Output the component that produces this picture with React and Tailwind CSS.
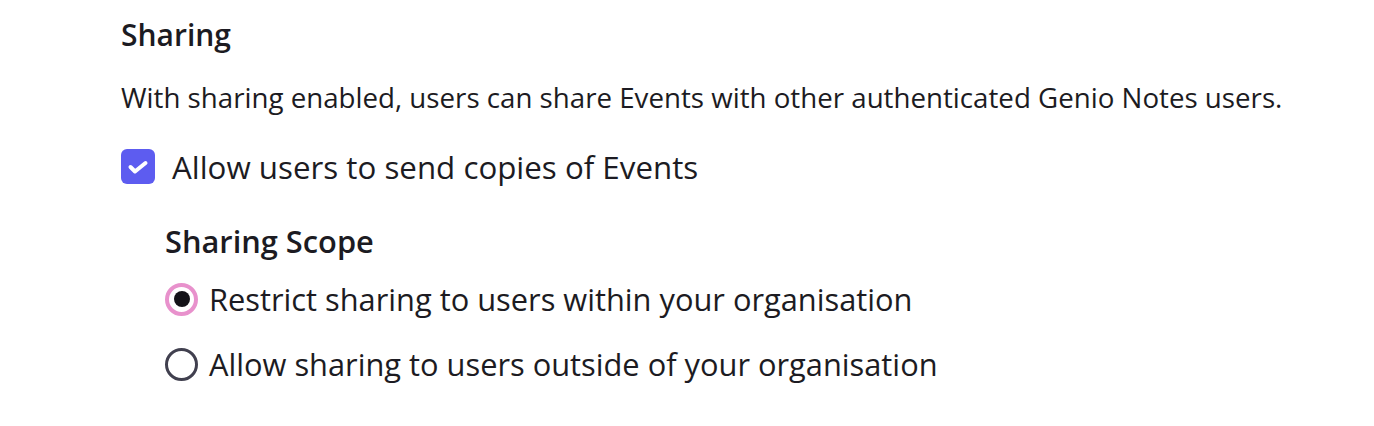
export default function App() {
  const font = { fontFamily: '"Open Sans", "Noto Sans", sans-serif' };
  return (
    <div className="w-[1374px] h-[426px] bg-white text-[#1c1b22] pl-[121px] pt-[16px]" style={font}>
      <h2 className="text-[30px] font-semibold leading-[38px]">Sharing</h2>
      <p className="mt-[28px] text-[27.7px] leading-[30px]">
        With sharing enabled, users can share Events with other authenticated Genio Notes users.
      </p>
      <label className="mt-[37px] flex items-center gap-[17px]">
        <span className="w-[34px] h-[35px] rounded-[6px] bg-[#5d5cf0] flex items-center justify-center">
          <svg width="34" height="35" viewBox="0 0 34 35" fill="none">
            <path d="M9.5 18l4.5 4.5 10.5-8.5" stroke="white" strokeWidth="4" strokeLinecap="round" strokeLinejoin="round" />
          </svg>
        </span>
        <span className="text-[31.3px] leading-[34px]">Allow users to send copies of Events</span>
      </label>
      <div className="pl-[44px] mt-[40px]">
        <h3 className="text-[30.8px] font-semibold leading-[34px]">Sharing Scope</h3>
        <div className="mt-[24px] flex items-center gap-[11px]">
          <span className="w-[33px] h-[33px] rounded-full border-[4px] border-[#e891cc] flex items-center justify-center">
            <span className="w-[16px] h-[16px] rounded-full bg-[#141318]" />
          </span>
          <span className="text-[30.8px] leading-[34px]">Restrict sharing to users within your organisation</span>
        </div>
        <div className="mt-[31px] flex items-center gap-[11px]">
          <span className="w-[33px] h-[33px] rounded-full border-[3px] border-[#41404f]" />
          <span className="text-[30.8px] leading-[34px]">Allow sharing to users outside of your organisation</span>
        </div>
      </div>
    </div>
  );
}
